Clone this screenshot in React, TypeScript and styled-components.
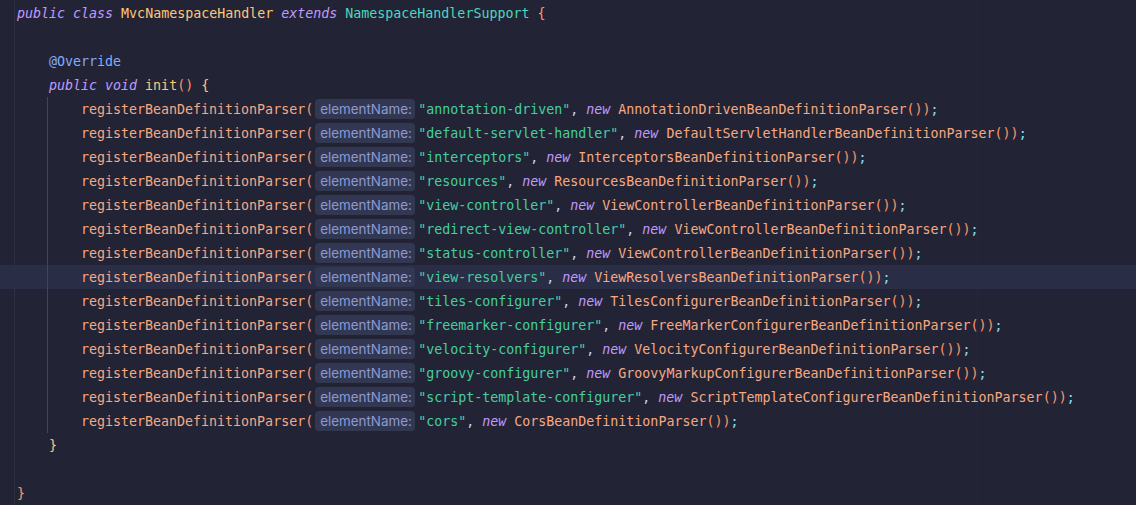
import React from "react";
import styled, { createGlobalStyle, css } from "styled-components";

const Global = createGlobalStyle`
  html, body { margin: 0; padding: 0; background: #222436; }
  #root { width: 1136px; height: 505px; overflow: hidden; }
`;

type Kind = "kw" | "cls" | "sup" | "ann" | "fn" | "call" | "str" | "punc" | "brO" | "brY" | "semi" | "plain";
type Tok = { t: string; k: Kind } | { hint: string };

const colors: Record<Kind, string> = {
  kw: "#c099ff",
  cls: "#ffc777",
  sup: "#4fd6be",
  ann: "#82aaff",
  fn: "#ffc777",
  call: "#f7a882",
  str: "#45cf9f",
  punc: "#c8d3f5",
  brO: "#ff966c",
  brY: "#ffc777",
  semi: "#86e1fc",
  plain: "#c8d3f5",
};

const Editor = styled.div`
  position: relative;
  width: 1136px;
  height: 505px;
  box-sizing: border-box;
  padding-top: 1px;
  background-color: #222436;
  background-image: linear-gradient(#262839, #262839);
  background-size: 1px 100%;
  background-position: 977px 0;
  background-repeat: no-repeat;
  font-family: "DejaVu Sans Mono", "Liberation Mono", monospace;
  font-size: 13.3px;
  display: flex;
  flex-direction: column;
`;

const guideLine = (x: number, c: string) => css`
  linear-gradient(${c}, ${c}) ${x}px 0 / 1px 100% no-repeat
`;

const Row = styled.div<{ $current?: boolean; $guide?: boolean; $indent: number }>`
  height: 24px;
  flex: none;
  display: flex;
  align-items: center;
  padding-left: ${(p) => 17 + p.$indent * 32}px;
  white-space: pre;
  background: ${(p) => (p.$guide ? css`${guideLine(47, "#42455a")},` : "")}
    ${guideLine(14, "#2d3045")},
    ${(p) => (p.$current ? "#2a2d46" : "transparent")};
`;

const Tk = styled.span<{ $k: Kind }>`
  color: ${(p) => colors[p.$k]};
  font-style: ${(p) => (p.$k === "kw" ? "italic" : "normal")};
`;

const Hint = styled.span`
  display: inline-flex;
  align-items: center;
  height: 20px;
  margin: 0 3px 0 2px;
  padding: 0 4px 0 5px;
  box-sizing: border-box;
  width: 100px;
  border-radius: 4px;
  background: #333852;
  color: #8d9ad6;
  font-family: Inter, "Noto Sans", sans-serif;
  font-size: 13.4px;
`;

const sp: Tok = { t: " ", k: "plain" };

const registers: [string, string][] = [
  ["annotation-driven", "AnnotationDrivenBeanDefinitionParser"],
  ["default-servlet-handler", "DefaultServletHandlerBeanDefinitionParser"],
  ["interceptors", "InterceptorsBeanDefinitionParser"],
  ["resources", "ResourcesBeanDefinitionParser"],
  ["view-controller", "ViewControllerBeanDefinitionParser"],
  ["redirect-view-controller", "ViewControllerBeanDefinitionParser"],
  ["status-controller", "ViewControllerBeanDefinitionParser"],
  ["view-resolvers", "ViewResolversBeanDefinitionParser"],
  ["tiles-configurer", "TilesConfigurerBeanDefinitionParser"],
  ["freemarker-configurer", "FreeMarkerConfigurerBeanDefinitionParser"],
  ["velocity-configurer", "VelocityConfigurerBeanDefinitionParser"],
  ["groovy-configurer", "GroovyMarkupConfigurerBeanDefinitionParser"],
  ["script-template-configurer", "ScriptTemplateConfigurerBeanDefinitionParser"],
  ["cors", "CorsBeanDefinitionParser"],
];

type Line = { indent: number; toks: Tok[]; guide?: boolean; current?: boolean };

const lines: Line[] = [
  {
    indent: 0,
    toks: [
      { t: "public", k: "kw" }, sp, { t: "class", k: "kw" }, sp,
      { t: "MvcNamespaceHandler", k: "cls" }, sp, { t: "extends", k: "kw" }, sp,
      { t: "NamespaceHandlerSupport", k: "sup" }, sp, { t: "{", k: "brO" },
    ],
  },
  { indent: 0, toks: [] },
  { indent: 1, toks: [{ t: "@Override", k: "ann" }] },
  {
    indent: 1,
    toks: [
      { t: "public", k: "kw" }, sp, { t: "void", k: "kw" }, sp,
      { t: "init", k: "fn" }, { t: "()", k: "brO" }, sp, { t: "{", k: "brY" },
    ],
  },
  ...registers.map(([name, cls]) => ({
    indent: 2,
    guide: true,
    current: name === "view-resolvers",
    toks: [
      { t: "registerBeanDefinitionParser", k: "call" as Kind },
      { t: "(", k: "brO" as Kind },
      { hint: "elementName:" },
      { t: `"${name}"`, k: "str" as Kind },
      { t: ", ", k: "punc" as Kind },
      { t: "new", k: "kw" as Kind },
      sp,
      { t: cls, k: "call" as Kind },
      { t: "())", k: "brO" as Kind },
      { t: ";", k: "semi" as Kind },
    ],
  })),
  { indent: 1, toks: [{ t: "}", k: "brY" }] },
  { indent: 0, toks: [] },
  { indent: 0, toks: [{ t: "}", k: "brO" }] },
];

export default function App() {
  return (
    <>
      <Global />
      <Editor>
        {lines.map((ln, i) => (
          <Row key={i} $indent={ln.indent} $guide={ln.guide} $current={ln.current}>
            {ln.toks.map((tk, j) =>
              "hint" in tk ? (
                <Hint key={j}>{tk.hint}</Hint>
              ) : (
                <Tk key={j} $k={tk.k}>
                  {tk.t}
                </Tk>
              )
            )}
          </Row>
        ))}
      </Editor>
    </>
  );
}
